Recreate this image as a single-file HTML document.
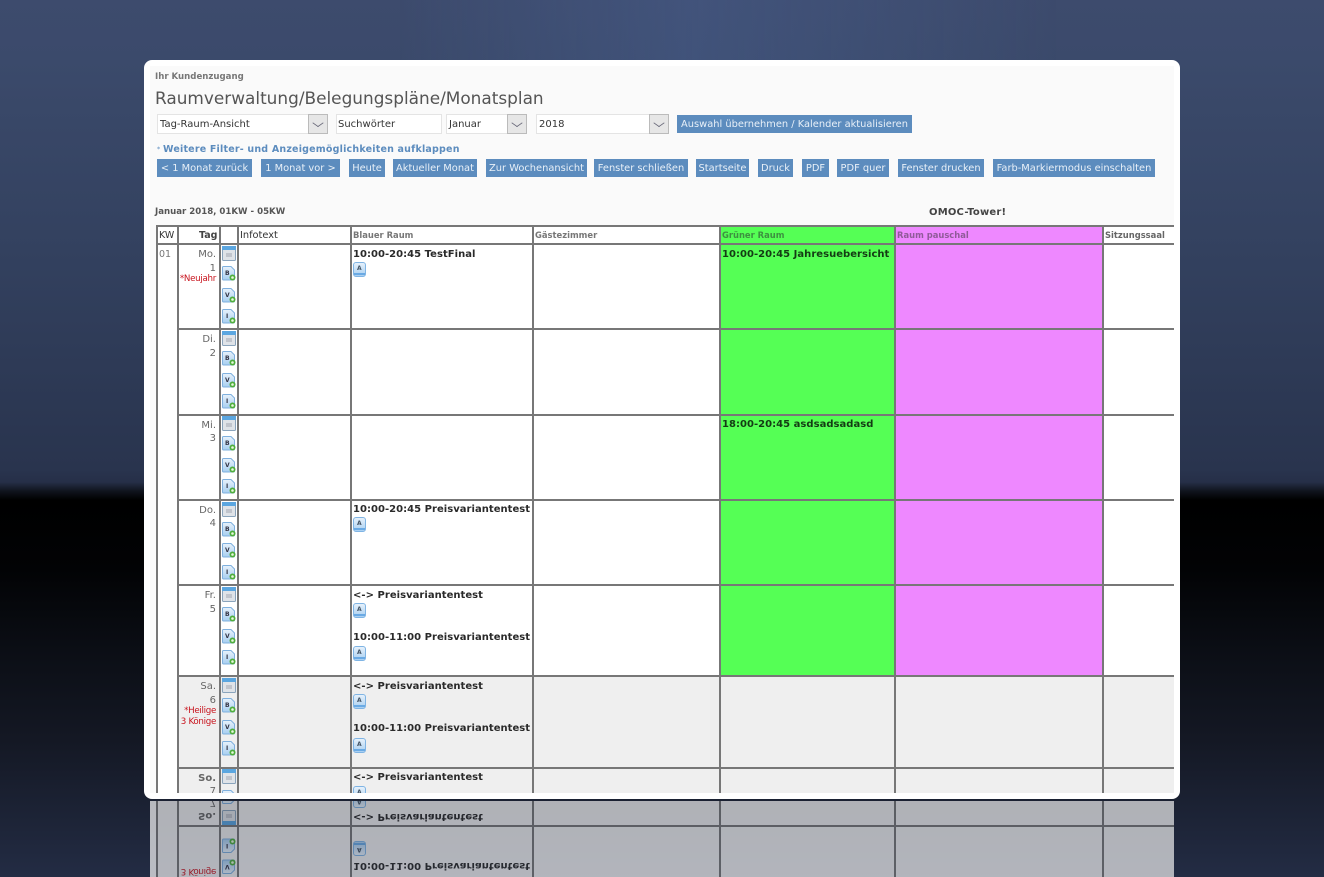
<!DOCTYPE html>
<html lang="de"><head><meta charset="utf-8"><title>Monatsplan</title>
<style>
html,body{margin:0;padding:0;width:1324px;height:877px;overflow:hidden;background:#000}
#bg{position:absolute;left:0;top:0;width:1324px;height:877px;background:linear-gradient(180deg,#3d4b6d 0,#3b4a6b 60px,#33415f 250px,#29344e 470px,#262f48 482px,#10141e 491px,#000 500px,#020305 570px,#0b0e15 650px,#141824 740px,#232c44 877px)}
#gl{position:absolute;left:0;top:0;width:1324px;height:490px;background:linear-gradient(90deg,rgba(80,110,170,0) 30%,rgba(85,115,175,.22) 52%,rgba(80,110,170,0) 80%);-webkit-mask-image:linear-gradient(180deg,#000 0,#000 60px,transparent 300px)}
#card{position:absolute;left:144px;top:60px;width:1036px;height:739px;background:#fff;border-radius:8px}
.clip{position:absolute;overflow:hidden}
#c{left:150px;top:66px;width:1024px;height:727px;background:#fafafa}
#r{left:150px;top:801px;width:1024px;height:76px;opacity:.7;background:#fafafa}
.p{position:absolute;width:1324px;font-family:"DejaVu Sans",Verdana,sans-serif;color:#444;filter:blur(.3px)}
#c .p{left:-150px;top:-66px;height:877px}
#r .p{left:-150px;top:0;height:76px;transform:scaleY(-1)}
.p div,.p svg{position:absolute}
.t{white-space:nowrap;line-height:12px}
.b{height:18px;line-height:19px;background:#5c8cbe;color:#e8f0f8;font-size:9.85px;text-align:center;white-space:nowrap}
.s{height:20px;background:#fff;border:1px solid #e4e4e4;box-sizing:border-box;font-size:10px;line-height:19px;color:#333;padding-left:2px;white-space:nowrap}
.ar{width:20px;height:20px;background:#e6e6e6;border:1px solid #bbb;box-sizing:border-box}
.ar:after{content:"";position:absolute;left:5px;top:4px;width:7px;height:7px;border-right:1px solid #667;border-bottom:1px solid #667;transform:scaleY(.7) rotate(45deg)}
.h{background:#777}
.hd{font-size:8.4px;font-weight:bold;color:#777;line-height:12px;white-space:nowrap}
.e{font-size:10px;font-weight:bold;color:#2a2a2a;white-space:nowrap;line-height:12px;letter-spacing:.03px}
.d{font-size:10px;color:#666;text-align:right;width:37px;left:179px;line-height:12px;white-space:nowrap}
.rd{font-size:8.7px;color:#c8141e;text-align:right;left:178px;width:38px;line-height:12px;white-space:nowrap;letter-spacing:-.3px}
</style></head><body>
<div id="bg"></div><div id="gl"></div><div id="card"></div>
<svg width="0" height="0" style="position:absolute"><defs>
<linearGradient id="g" x1="0" y1="0" x2="0" y2="1"><stop offset="0" stop-color="#e8f2fb"/><stop offset="1" stop-color="#a6cef0"/></linearGradient>
<symbol id="cal" viewBox="0 0 14 15"><rect x=".5" y=".5" width="13" height="14" rx="1" fill="#dfe3e8" stroke="#8aa4bc"/><rect x="0" y="0" width="14" height="4" fill="#5ba6e0"/><rect x="4" y="7" width="6" height="4" fill="#c0c4cc"/></symbol>
<symbol id="doc" viewBox="0 0 14 15"><path d="M.5 1.5Q.5.5 1.5.5H9L12.5 4V13Q12.5 14 11.5 14H1.5Q.5 14 .5 13Z" fill="url(#g)" stroke="#7fb0de"/><circle cx="10.5" cy="11.5" r="3" fill="#4fae3c"/><circle cx="10.5" cy="11.5" r="1.3" fill="#e8f8e0"/></symbol>
<symbol id="a" viewBox="0 0 14 15"><rect x=".5" y=".5" width="12" height="14" rx="2.5" fill="url(#g)" stroke="#7fb4e4"/><rect x="1" y="11" width="11" height="2" fill="#6aaae4"/></symbol>
</defs></svg>

<div class="clip" id="c"><div class="p">
<div class="t" style="left:155px;top:71px;font-size:8.6px;font-weight:bold;color:#777">Ihr Kundenzugang</div>
<div class="t" style="left:155px;top:88px;font-size:16.9px;line-height:20px;color:#555">Raumverwaltung/Belegungspläne/Monatsplan</div>
<div class="s" style="left:157px;top:114px;width:171px">Tag-Raum-Ansicht</div><div class="ar" style="left:308px;top:114px"></div>
<div class="s" style="left:336px;top:114px;width:106px;padding-left:1px">Suchwörter</div>
<div class="s" style="left:446px;top:114px;width:81px">Januar</div><div class="ar" style="left:507px;top:114px"></div>
<div class="s" style="left:536px;top:114px;width:133px">2018</div><div class="ar" style="left:649px;top:114px"></div>
<div class="b" style="left:677px;top:115px;width:235px">Auswahl übernehmen / Kalender aktualisieren</div>
<div class="t" style="left:157px;top:144px;font-size:6px;font-weight:bold;color:#7ba3cc">*</div>
<div class="t" style="left:163px;top:144px;font-size:9.5px;font-weight:bold;color:#5c8cbe;letter-spacing:.2px">Weitere Filter- und Anzeigemöglichkeiten aufklappen</div>
<div class="b" style="left:157px;top:159px;width:95px">&lt; 1 Monat zurück</div>
<div class="b" style="left:261px;top:159px;width:79px">1 Monat vor &gt;</div>
<div class="b" style="left:349px;top:159px;width:36px">Heute</div>
<div class="b" style="left:393px;top:159px;width:84px">Aktueller Monat</div>
<div class="b" style="left:486px;top:159px;width:101px">Zur Wochenansicht</div>
<div class="b" style="left:594px;top:159px;width:94px">Fenster schließen</div>
<div class="b" style="left:696px;top:159px;width:53px">Startseite</div>
<div class="b" style="left:758px;top:159px;width:35px">Druck</div>
<div class="b" style="left:802px;top:159px;width:27px">PDF</div>
<div class="b" style="left:837px;top:159px;width:52px">PDF quer</div>
<div class="b" style="left:898px;top:159px;width:86px">Fenster drucken</div>
<div class="b" style="left:993px;top:159px;width:162px">Farb-Markiermodus einschalten</div>
<div class="t" style="left:155px;top:206px;font-size:8.6px;font-weight:bold;color:#555">Januar 2018, 01KW - 05KW</div>
<div class="t" style="left:929px;top:207px;font-size:10px;font-weight:bold;color:#444;letter-spacing:.2px">OMOC-Tower!</div>

<div style="left:156px;top:226px;width:1020px;height:567px;background:#fff"></div>
<div style="left:156px;top:677px;width:1020px;height:116px;background:#efefef"></div>
<div style="left:156px;top:226px;width:22px;height:567px;background:#fff"></div>
<div style="left:720px;top:226px;width:174px;height:450px;background:#55ff55"></div>
<div style="left:894px;top:226px;width:209px;height:450px;background:#ee88ff"></div>

<div class="h" style="left:156px;top:225px;width:1020px;height:2px"></div>
<div class="h" style="left:156px;top:243px;width:1020px;height:2px"></div>
<div class="h" style="left:178px;top:328px;width:998px;height:2px"></div>
<div class="h" style="left:178px;top:414px;width:998px;height:2px"></div>
<div class="h" style="left:178px;top:499px;width:998px;height:2px"></div>
<div class="h" style="left:178px;top:584px;width:998px;height:2px"></div>
<div class="h" style="left:178px;top:675px;width:998px;height:2px"></div>
<div class="h" style="left:178px;top:767px;width:998px;height:2px"></div>
<div class="h" style="left:156px;top:226px;width:2px;height:567px"></div>
<div class="h" style="left:177px;top:226px;width:2px;height:567px"></div>
<div class="h" style="left:219px;top:226px;width:2px;height:567px"></div>
<div class="h" style="left:237px;top:226px;width:2px;height:567px"></div>
<div class="h" style="left:350px;top:226px;width:2px;height:567px"></div>
<div class="h" style="left:532px;top:226px;width:2px;height:567px"></div>
<div class="h" style="left:719px;top:226px;width:2px;height:567px"></div>
<div class="h" style="left:894px;top:226px;width:2px;height:567px"></div>
<div class="h" style="left:1102px;top:226px;width:2px;height:567px"></div>

<div class="t" style="left:159px;top:230px;font-size:9.5px;color:#333">KW</div>
<div class="t" style="left:199px;top:230px;font-size:9.5px;font-weight:bold;color:#444">Tag</div>
<div class="t" style="left:240px;top:230px;font-size:9.8px;color:#333">Infotext</div>
<div class="hd" style="left:353px;top:229px">Blauer Raum</div>
<div class="hd" style="left:535px;top:229px">Gästezimmer</div>
<div class="hd" style="left:722px;top:229px;color:#3d9140">Grüner Raum</div>
<div class="hd" style="left:897px;top:229px;color:#8f5a98">Raum pauschal</div>
<div class="hd" style="left:1105px;top:229px;color:#666">Sitzungssaal</div>
<div class="t" style="left:159px;top:249px;font-size:9.5px;color:#777">01</div>

<div class="d" style="top:249px">Mo.</div><div class="d" style="top:263px">1</div><div class="rd" style="top:273px">*Neujahr</div>
<div class="d" style="top:334px">Di.</div><div class="d" style="top:348px">2</div>
<div class="d" style="top:420px">Mi.</div><div class="d" style="top:433px">3</div>
<div class="d" style="top:505px">Do.</div><div class="d" style="top:518px">4</div>
<div class="d" style="top:590px">Fr.</div><div class="d" style="top:604px">5</div>
<div class="d" style="top:681px">Sa.</div><div class="d" style="top:695px">6</div><div class="rd" style="top:705px">*Heilige</div><div class="rd" style="top:716px">3 Könige</div>
<div class="d" style="top:773px;font-weight:bold">So.</div><div class="d" style="top:786px">7</div>

<svg style="left:222px;top:246px" width="14" height="15"><use href="#cal"/></svg><svg style="left:222px;top:266px" width="14" height="15"><use href="#doc"/><text x="3" y="9" font-size="6" font-weight="bold" fill="#334">B</text></svg><svg style="left:222px;top:288px" width="14" height="15"><use href="#doc"/><text x="3" y="9" font-size="6" font-weight="bold" fill="#334">V</text></svg><svg style="left:222px;top:309px" width="14" height="15"><use href="#doc"/><text x="4" y="9" font-size="6" font-weight="bold" fill="#334">I</text></svg>
<svg style="left:222px;top:331px" width="14" height="15"><use href="#cal"/></svg><svg style="left:222px;top:351px" width="14" height="15"><use href="#doc"/><text x="3" y="9" font-size="6" font-weight="bold" fill="#334">B</text></svg><svg style="left:222px;top:373px" width="14" height="15"><use href="#doc"/><text x="3" y="9" font-size="6" font-weight="bold" fill="#334">V</text></svg><svg style="left:222px;top:394px" width="14" height="15"><use href="#doc"/><text x="4" y="9" font-size="6" font-weight="bold" fill="#334">I</text></svg>
<svg style="left:222px;top:416px" width="14" height="15"><use href="#cal"/></svg><svg style="left:222px;top:436px" width="14" height="15"><use href="#doc"/><text x="3" y="9" font-size="6" font-weight="bold" fill="#334">B</text></svg><svg style="left:222px;top:458px" width="14" height="15"><use href="#doc"/><text x="3" y="9" font-size="6" font-weight="bold" fill="#334">V</text></svg><svg style="left:222px;top:479px" width="14" height="15"><use href="#doc"/><text x="4" y="9" font-size="6" font-weight="bold" fill="#334">I</text></svg>
<svg style="left:222px;top:502px" width="14" height="15"><use href="#cal"/></svg><svg style="left:222px;top:522px" width="14" height="15"><use href="#doc"/><text x="3" y="9" font-size="6" font-weight="bold" fill="#334">B</text></svg><svg style="left:222px;top:543px" width="14" height="15"><use href="#doc"/><text x="3" y="9" font-size="6" font-weight="bold" fill="#334">V</text></svg><svg style="left:222px;top:565px" width="14" height="15"><use href="#doc"/><text x="4" y="9" font-size="6" font-weight="bold" fill="#334">I</text></svg>
<svg style="left:222px;top:587px" width="14" height="15"><use href="#cal"/></svg><svg style="left:222px;top:607px" width="14" height="15"><use href="#doc"/><text x="3" y="9" font-size="6" font-weight="bold" fill="#334">B</text></svg><svg style="left:222px;top:629px" width="14" height="15"><use href="#doc"/><text x="3" y="9" font-size="6" font-weight="bold" fill="#334">V</text></svg><svg style="left:222px;top:650px" width="14" height="15"><use href="#doc"/><text x="4" y="9" font-size="6" font-weight="bold" fill="#334">I</text></svg>
<svg style="left:222px;top:678px" width="14" height="15"><use href="#cal"/></svg><svg style="left:222px;top:698px" width="14" height="15"><use href="#doc"/><text x="3" y="9" font-size="6" font-weight="bold" fill="#334">B</text></svg><svg style="left:222px;top:720px" width="14" height="15"><use href="#doc"/><text x="3" y="9" font-size="6" font-weight="bold" fill="#334">V</text></svg><svg style="left:222px;top:741px" width="14" height="15"><use href="#doc"/><text x="4" y="9" font-size="6" font-weight="bold" fill="#334">I</text></svg>
<svg style="left:222px;top:769px" width="14" height="15"><use href="#cal"/></svg><svg style="left:222px;top:790px" width="14" height="15"><use href="#doc"/><text x="3" y="9" font-size="6" font-weight="bold" fill="#334">B</text></svg>

<div class="e" style="left:353px;top:249px">10:00-20:45 TestFinal</div>
<svg style="left:353px;top:262px" width="14" height="15"><use href="#a"/><text x="4" y="8" font-size="6" font-weight="bold" fill="#456">A</text></svg>
<div class="e" style="left:353px;top:504px">10:00-20:45 Preisvariantentest</div>
<svg style="left:353px;top:517px" width="14" height="15"><use href="#a"/><text x="4" y="8" font-size="6" font-weight="bold" fill="#456">A</text></svg>
<div class="e" style="left:353px;top:590px">&lt;-&gt; Preisvariantentest</div>
<svg style="left:353px;top:603px" width="14" height="15"><use href="#a"/><text x="4" y="8" font-size="6" font-weight="bold" fill="#456">A</text></svg>
<div class="e" style="left:353px;top:632px">10:00-11:00 Preisvariantentest</div>
<svg style="left:353px;top:646px" width="14" height="15"><use href="#a"/><text x="4" y="8" font-size="6" font-weight="bold" fill="#456">A</text></svg>
<div class="e" style="left:353px;top:681px">&lt;-&gt; Preisvariantentest</div>
<svg style="left:353px;top:694px" width="14" height="15"><use href="#a"/><text x="4" y="8" font-size="6" font-weight="bold" fill="#456">A</text></svg>
<div class="e" style="left:353px;top:723px">10:00-11:00 Preisvariantentest</div>
<svg style="left:353px;top:738px" width="14" height="15"><use href="#a"/><text x="4" y="8" font-size="6" font-weight="bold" fill="#456">A</text></svg>
<div class="e" style="left:353px;top:772px">&lt;-&gt; Preisvariantentest</div>
<svg style="left:353px;top:786px" width="14" height="15"><use href="#a"/><text x="4" y="8" font-size="6" font-weight="bold" fill="#456">A</text></svg>
<div class="e" style="left:722px;top:249px;color:#143c14">10:00-20:45 Jahresuebersicht</div>
<div class="e" style="left:722px;top:419px;color:#143c14">18:00-20:45 asdsadsadasd</div>
</div></div>

<div class="clip" id="r"><div class="p">
<div style="left:156px;top:0;width:1020px;height:76px;background:#efefef"></div>
<div class="h" style="left:178px;top:50px;width:998px;height:2px"></div>
<div class="h" style="left:156px;top:0;width:2px;height:76px"></div>
<div class="h" style="left:177px;top:0;width:2px;height:76px"></div>
<div class="h" style="left:219px;top:0;width:2px;height:76px"></div>
<div class="h" style="left:237px;top:0;width:2px;height:76px"></div>
<div class="h" style="left:350px;top:0;width:2px;height:76px"></div>
<div class="h" style="left:532px;top:0;width:2px;height:76px"></div>
<div class="h" style="left:719px;top:0;width:2px;height:76px"></div>
<div class="h" style="left:894px;top:0;width:2px;height:76px"></div>
<div class="h" style="left:1102px;top:0;width:2px;height:76px"></div>
<div class="rd" style="top:0;height:11px;overflow:hidden">3 Könige</div>
<div class="d" style="top:56px;font-weight:bold">So.</div><div class="d" style="top:69px">7</div>
<svg style="left:222px;top:3px" width="14" height="15"><use href="#doc"/><text x="3" y="9" font-size="6" font-weight="bold" fill="#334">V</text></svg><svg style="left:222px;top:24px" width="14" height="15"><use href="#doc"/><text x="4" y="9" font-size="6" font-weight="bold" fill="#334">I</text></svg>
<svg style="left:222px;top:52px" width="14" height="15"><use href="#cal"/></svg><svg style="left:222px;top:73px" width="14" height="15"><use href="#doc"/><text x="3" y="9" font-size="6" font-weight="bold" fill="#334">B</text></svg>
<div class="e" style="left:353px;top:6px">10:00-11:00 Preisvariantentest</div>
<svg style="left:353px;top:21px" width="14" height="15"><use href="#a"/><text x="4" y="8" font-size="6" font-weight="bold" fill="#456">A</text></svg>
<div class="e" style="left:353px;top:55px">&lt;-&gt; Preisvariantentest</div>
<svg style="left:353px;top:69px" width="14" height="15"><use href="#a"/><text x="4" y="8" font-size="6" font-weight="bold" fill="#456">A</text></svg>
</div></div>
</body></html>
